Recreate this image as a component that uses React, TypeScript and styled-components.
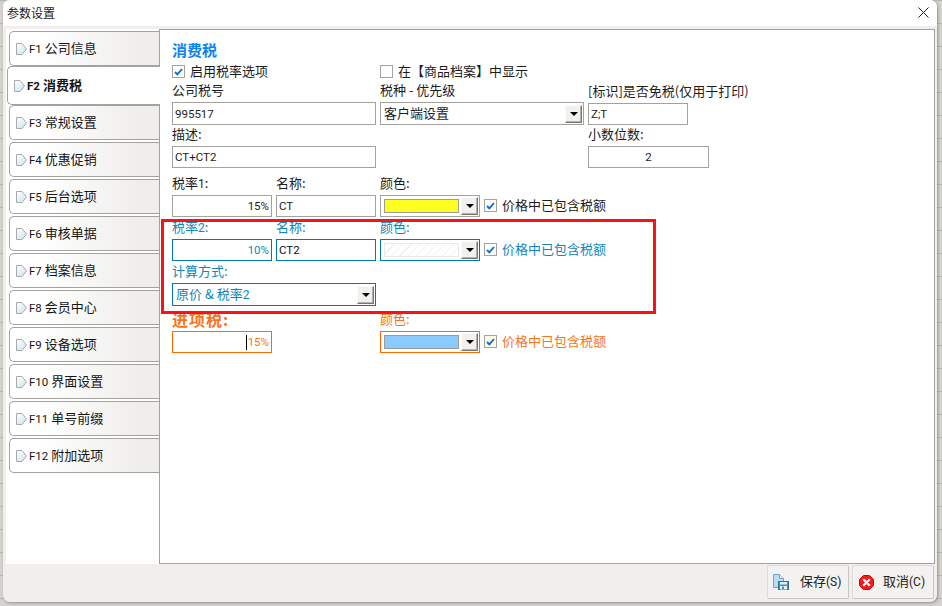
import styled, { createGlobalStyle } from "styled-components";

const GlobalStyle = createGlobalStyle`
  html, body {
    margin: 0;
    padding: 0;
    width: 942px;
    height: 606px;
    overflow: hidden;
    font-family: "Noto Sans CJK SC", "Noto Sans", sans-serif;
    font-size: 13px;
    color: #1a1a1a;
  }
  * { box-sizing: border-box; }
`;

type Tone = "plain" | "blue" | "orange";

const toneText: Record<Tone, string> = {
  plain: "#1c1c1c",
  blue: "#0f86bd",
  orange: "#f9741a",
};
const toneBorder: Record<Tone, string> = {
  plain: "#a3a29d",
  blue: "#0079b3",
  orange: "#ff6a00",
};

const Desktop = styled.div`
  width: 942px;
  height: 606px;
  padding: 0 5px 4px 3px;
  background-color: #d4d3ce;
  background-image: linear-gradient(#b9b8b3 1px, transparent 1px);
  background-size: 100% 23px;
`;

const Window = styled.div`
  width: 100%;
  height: 100%;
  display: flex;
  flex-direction: column;
  position: relative;
  background: #f0efee;
  border-radius: 7px;
  box-shadow: 1px 1px 3px rgba(90, 90, 90, 0.55);
  overflow: hidden;
`;

const TitleBar = styled.div`
  height: 26px;
  flex: none;
  display: flex;
  align-items: center;
  justify-content: space-between;
  padding: 0 8px 1px 4px;
  background: #fff;
  font-size: 12px;
  color: #222;
`;

const TitleText = styled.span`
  padding-bottom: 1px;
`;

const Body = styled.div`
  flex: 1;
  min-height: 0;
  display: flex;
  padding: 3px 2px 0 3px;
`;

const Sidebar = styled.div`
  width: 153px;
  flex: none;
  padding: 2px 0 0 3px;
  background: #fff;
  display: flex;
  flex-direction: column;
`;

const Tab = styled.div<{ $active?: boolean }>`
  display: flex;
  align-items: center;
  gap: 2px;
  flex: none;
  height: ${(p) => (p.$active ? "39px" : "35px")};
  margin: ${(p) => (p.$active ? "-2px -1px 0 -2px" : "0 0 2px 0")};
  padding-left: 6px;
  border: 1px solid #a3a29d;
  border-right: none;
  border-radius: 5px 0 0 5px;
  background: ${(p) =>
    p.$active ? "#fff" : "linear-gradient(90deg, #ffffff 20%, #efeeec 85%)"};
  font-weight: ${(p) => (p.$active ? 700 : 400)};
  position: relative;
  z-index: ${(p) => (p.$active ? 2 : 0)};
  color: #151515;
  white-space: nowrap;
`;

const TabText = styled.span`
  padding-bottom: 2px;
`;

const TabKey = styled.span`
  font-family: "Roboto", "Noto Sans", sans-serif;
  font-size: 11.5px;
`;

const Panel = styled.div`
  flex: 1;
  min-width: 0;
  position: relative;
  padding: 12px 0 0 12px;
  background: #fff;
  border: 1px solid #a3a29d;
  z-index: 1;
`;

const SectionTitle = styled.div`
  height: 18px;
  line-height: 16px;
  font-size: 15px;
  font-weight: 700;
  color: #0a84f0;
`;

const Row = styled.div<{ $top?: number }>`
  display: flex;
  align-items: flex-end;
  gap: 4px;
  margin-top: ${(p) => p.$top ?? 0}px;
`;

const CheckLine = styled.div`
  display: flex;
  align-items: center;
  height: 18px;
  margin-top: 3px;
`;

const Field = styled.div<{ $width: number }>`
  width: ${(p) => p.$width}px;
  flex: none;
`;

const Label = styled.div<{ $tone?: Tone; $large?: boolean }>`
  height: 20px;
  line-height: 16px;
  white-space: nowrap;
  font-size: ${(p) => (p.$large ? "16px" : "13px")};
  font-weight: ${(p) => (p.$large ? 700 : 400)};
  letter-spacing: ${(p) => (p.$large ? "1px" : "0")};
  color: ${(p) => toneText[p.$tone ?? "plain"]};
`;

const LatinNum = styled.span`
  font-family: "Roboto", sans-serif;
  font-size: 12px;
`;

const TextBox = styled.div<{
  $tone?: Tone;
  $height?: number;
  $align?: string;
}>`
  height: ${(p) => p.$height ?? 22}px;
  display: flex;
  align-items: center;
  justify-content: ${(p) => p.$align ?? "flex-start"};
  padding: 0 2px;
  border: 1px solid ${(p) => toneBorder[p.$tone ?? "plain"]};
  background: #fff;
  font-family: "Roboto", "Noto Sans CJK SC", sans-serif;
  font-size: 11.5px;
  color: ${(p) => toneText[p.$tone ?? "plain"]};
  white-space: nowrap;
`;

const DarkValue = styled.span`
  color: #111;
`;

const Caret = styled.span`
  display: inline-block;
  width: 1px;
  height: 15px;
  margin-right: 1px;
  background: #000;
`;

const ComboBox = styled.div<{ $tone?: Tone; $height?: number }>`
  height: ${(p) => p.$height ?? 22}px;
  display: flex;
  align-items: center;
  justify-content: space-between;
  padding: 0 1px 0 3px;
  border: 1px solid ${(p) => toneBorder[p.$tone ?? "plain"]};
  background: #fff;
  color: ${(p) => toneText[p.$tone ?? "plain"]};
  white-space: nowrap;
`;

const ComboText = styled.span`
  padding-bottom: 2px;
`;

const Swatch = styled.div<{ $color?: string }>`
  width: 75px;
  height: 14px;
  border: 1px solid ${(p) => (p.$color ? "#9d9c98" : "#e9e9e9")};
  background: ${(p) =>
    p.$color ??
    "repeating-linear-gradient(-45deg, #fff 0 5px, #efefef 5px 6px)"};
`;

const DropButton = styled.div`
  width: 17px;
  height: 18px;
  flex: none;
  display: flex;
  align-items: center;
  justify-content: center;
  background: #f1f0ee;
  border-top: 1px solid #fbfbfa;
  border-left: 1px solid #fbfbfa;
  border-right: 1px solid #77766f;
  border-bottom: 1px solid #77766f;
  box-shadow: inset -1px -1px 0 #b3b2ad;

  &::after {
    content: "";
    width: 0;
    height: 0;
    border-left: 4px solid transparent;
    border-right: 4px solid transparent;
    border-top: 4px solid #000;
  }
`;

const CheckWrap = styled.label<{ $tone?: Tone }>`
  display: flex;
  align-items: center;
  gap: 5px;
  height: 21px;
  margin-bottom: 1px;
  white-space: nowrap;
  color: ${(p) => toneText[p.$tone ?? "plain"]};
`;

const CheckText = styled.span`
  padding-bottom: 2px;
`;

const CheckBox = styled.span<{ $tint?: string }>`
  width: 13px;
  height: 13px;
  flex: none;
  display: flex;
  align-items: center;
  justify-content: center;
  border: 1px solid #a3a29d;
  background: ${(p) => p.$tint ?? "#fff"};
`;

const RedFrame = styled.div`
  position: absolute;
  left: 1px;
  top: 189px;
  width: 495px;
  height: 95px;
  border: 3px solid #f5141c;
  pointer-events: none;
`;

const Footer = styled.div`
  flex: none;
  height: 38px;
  display: flex;
  justify-content: flex-end;
  gap: 3px;
  padding: 1px 3px 3px 0;
`;

const FootButton = styled.div<{ $iconGap: number; $inset: number }>`
  width: 82px;
  height: 34px;
  display: flex;
  align-items: center;
  gap: ${(p) => p.$iconGap}px;
  padding-left: ${(p) => p.$inset}px;
  border: 1px solid #dcdbd8;
  border-right-color: #c6c5c1;
  border-bottom-color: #c6c5c1;
  border-radius: 2px;
  background: #f3f2f1;
  color: #222;
  white-space: nowrap;
`;

const FootText = styled.span`
  padding-bottom: 3px;
`;

const Hotkey = styled.span`
  font-family: "Roboto", sans-serif;
  font-size: 12px;
`;

const tabs = [
  ["F1", "公司信息"],
  ["F2", "消费税"],
  ["F3", "常规设置"],
  ["F4", "优惠促销"],
  ["F5", "后台选项"],
  ["F6", "审核单据"],
  ["F7", "档案信息"],
  ["F8", "会员中心"],
  ["F9", "设备选项"],
  ["F10", "界面设置"],
  ["F11", "单号前缀"],
  ["F12", "附加选项"],
];

const TabArrow = () => (
  <svg width="11" height="12" viewBox="0 0 11 12" style={{ flex: "none" }}>
    <defs>
      <linearGradient id="tabArrow" x1="0" y1="0" x2="0.7" y2="1">
        <stop offset="0" stopColor="#ffffff" />
        <stop offset="1" stopColor="#cfe6f2" />
      </linearGradient>
    </defs>
    <path
      d="M0.5 0.5H6L10.5 6L6 11.5H0.5Z"
      fill="url(#tabArrow)"
      stroke="#a9aaa8"
    />
  </svg>
);

const Tick = () => (
  <svg width="9" height="8" viewBox="0 0 9 8">
    <path
      d="M1 4L3.4 6.4L8 1"
      fill="none"
      stroke="#0b6fc8"
      strokeWidth="1.9"
    />
  </svg>
);

const CloseIcon = () => (
  <svg width="11" height="11" viewBox="0 0 11 11">
    <path d="M0.5 0.5L10.5 10.5M10.5 0.5L0.5 10.5" stroke="#222" />
  </svg>
);

const SaveIcon = () => (
  <svg width="16" height="16" viewBox="0 0 16 16" style={{ flex: "none" }}>
    <path d="M0.5 0.5H6.5L10.5 4.5V13.5H0.5Z" fill="#bcdcf2" stroke="#6aa6d2" />
    <path d="M6.5 0.5V4.5H10.5" fill="#eaf5fc" stroke="#6aa6d2" />
    <rect x="5.5" y="7.5" width="10" height="8" fill="#4a8fc2" stroke="#2f729f" />
    <rect x="7" y="8" width="7" height="2.5" fill="#d9eefb" />
    <rect x="7" y="12" width="7" height="3.5" fill="#e6f3dc" />
    <rect x="9" y="12.5" width="2" height="2.5" fill="#4a8fc2" />
  </svg>
);

const CancelIcon = () => (
  <svg width="15" height="15" viewBox="0 0 15 15" style={{ flex: "none" }}>
    <path
      d="M4.5 0.5H10.5L14.5 4.5V10.5L10.5 14.5H4.5L0.5 10.5V4.5Z"
      fill="#ee1c1c"
      stroke="#e00000"
    />
    <path
      d="M5 5L10 10M10 5L5 10"
      stroke="#fff"
      strokeWidth="2.2"
      strokeLinecap="square"
    />
  </svg>
);

const IncludeTax = ({ tone, tint }: { tone?: Tone; tint?: string }) => (
  <CheckWrap $tone={tone}>
    <CheckBox $tint={tint}>
      <Tick />
    </CheckBox>
    <CheckText>价格中已包含税额</CheckText>
  </CheckWrap>
);

const App = () => {
  return (
    <>
      <GlobalStyle />
      <Desktop>
        <Window>
          <TitleBar>
            <TitleText>参数设置</TitleText>
            <CloseIcon />
          </TitleBar>
          <Body>
            <Sidebar>
              {tabs.map(([key, name]) => (
                <Tab key={key} $active={key === "F2"}>
                  <TabArrow />
                  <TabText>
                    <TabKey>{key}</TabKey> {name}
                  </TabText>
                </Tab>
              ))}
            </Sidebar>
            <Panel>
              <SectionTitle>消费税</SectionTitle>
              <CheckLine>
                <Field $width={208}>
                  <CheckWrap>
                    <CheckBox>
                      <Tick />
                    </CheckBox>
                    <CheckText>启用税率选项</CheckText>
                  </CheckWrap>
                </Field>
                <CheckWrap>
                  <CheckBox />
                  <CheckText>在【商品档案】中显示</CheckText>
                </CheckWrap>
              </CheckLine>

              <Row $top={1}>
                <Field $width={204}>
                  <Label>公司税号</Label>
                  <TextBox $height={23}>995517</TextBox>
                </Field>
                <Field $width={204}>
                  <Label>税种 - 优先级</Label>
                  <ComboBox $height={23}>
                    <ComboText>客户端设置</ComboText>
                    <DropButton />
                  </ComboBox>
                </Field>
                <Field $width={100}>
                  <Label>[标识]是否免税(仅用于打印)</Label>
                  <TextBox>Z;T</TextBox>
                </Field>
              </Row>

              <Row $top={1}>
                <Field $width={204}>
                  <Label>描述:</Label>
                  <TextBox>CT+CT2</TextBox>
                </Field>
                <Field $width={204} />
                <Field $width={121}>
                  <Label>小数位数:</Label>
                  <TextBox $align="center">2</TextBox>
                </Field>
              </Row>

              <Row $top={7}>
                <Field $width={100}>
                  <Label>
                    税率<LatinNum>1</LatinNum>:
                  </Label>
                  <TextBox $align="flex-end">15%</TextBox>
                </Field>
                <Field $width={100}>
                  <Label>名称:</Label>
                  <TextBox>CT</TextBox>
                </Field>
                <Field $width={100}>
                  <Label>颜色:</Label>
                  <ComboBox>
                    <Swatch $color="#ffff1f" />
                    <DropButton />
                  </ComboBox>
                </Field>
                <IncludeTax />
              </Row>

              <Row $top={2}>
                <Field $width={100}>
                  <Label $tone="blue">
                    税率<LatinNum>2</LatinNum>:
                  </Label>
                  <TextBox $tone="blue" $align="flex-end">
                    10%
                  </TextBox>
                </Field>
                <Field $width={100}>
                  <Label $tone="blue">名称:</Label>
                  <TextBox $tone="blue">
                    <DarkValue>CT2</DarkValue>
                  </TextBox>
                </Field>
                <Field $width={100}>
                  <Label $tone="blue">颜色:</Label>
                  <ComboBox $tone="blue">
                    <Swatch />
                    <DropButton />
                  </ComboBox>
                </Field>
                <IncludeTax tone="blue" />
              </Row>

              <Row $top={2}>
                <Field $width={204}>
                  <Label $tone="blue">计算方式:</Label>
                  <ComboBox $tone="blue" $height={23}>
                    <ComboText>
                      原价 &amp; 税率<LatinNum>2</LatinNum>
                    </ComboText>
                    <DropButton />
                  </ComboBox>
                </Field>
              </Row>

              <Row $top={5}>
                <Field $width={100}>
                  <Label $tone="orange" $large>
                    进项税:
                  </Label>
                  <TextBox $tone="orange" $align="flex-end">
                    <Caret />
                    15%
                  </TextBox>
                </Field>
                <Field $width={100} />
                <Field $width={100}>
                  <Label $tone="orange">颜色:</Label>
                  <ComboBox $tone="orange">
                    <Swatch $color="#8acbff" />
                    <DropButton />
                  </ComboBox>
                </Field>
                <IncludeTax tone="orange" tint="#fffde8" />
              </Row>

              <RedFrame />
            </Panel>
          </Body>
          <Footer>
            <FootButton $iconGap={11} $inset={5}>
              <SaveIcon />
              <FootText>
                保存<Hotkey>(S)</Hotkey>
              </FootText>
            </FootButton>
            <FootButton $iconGap={9} $inset={6}>
              <CancelIcon />
              <FootText>
                取消<Hotkey>(C)</Hotkey>
              </FootText>
            </FootButton>
          </Footer>
        </Window>
      </Desktop>
    </>
  );
};

export default App;
